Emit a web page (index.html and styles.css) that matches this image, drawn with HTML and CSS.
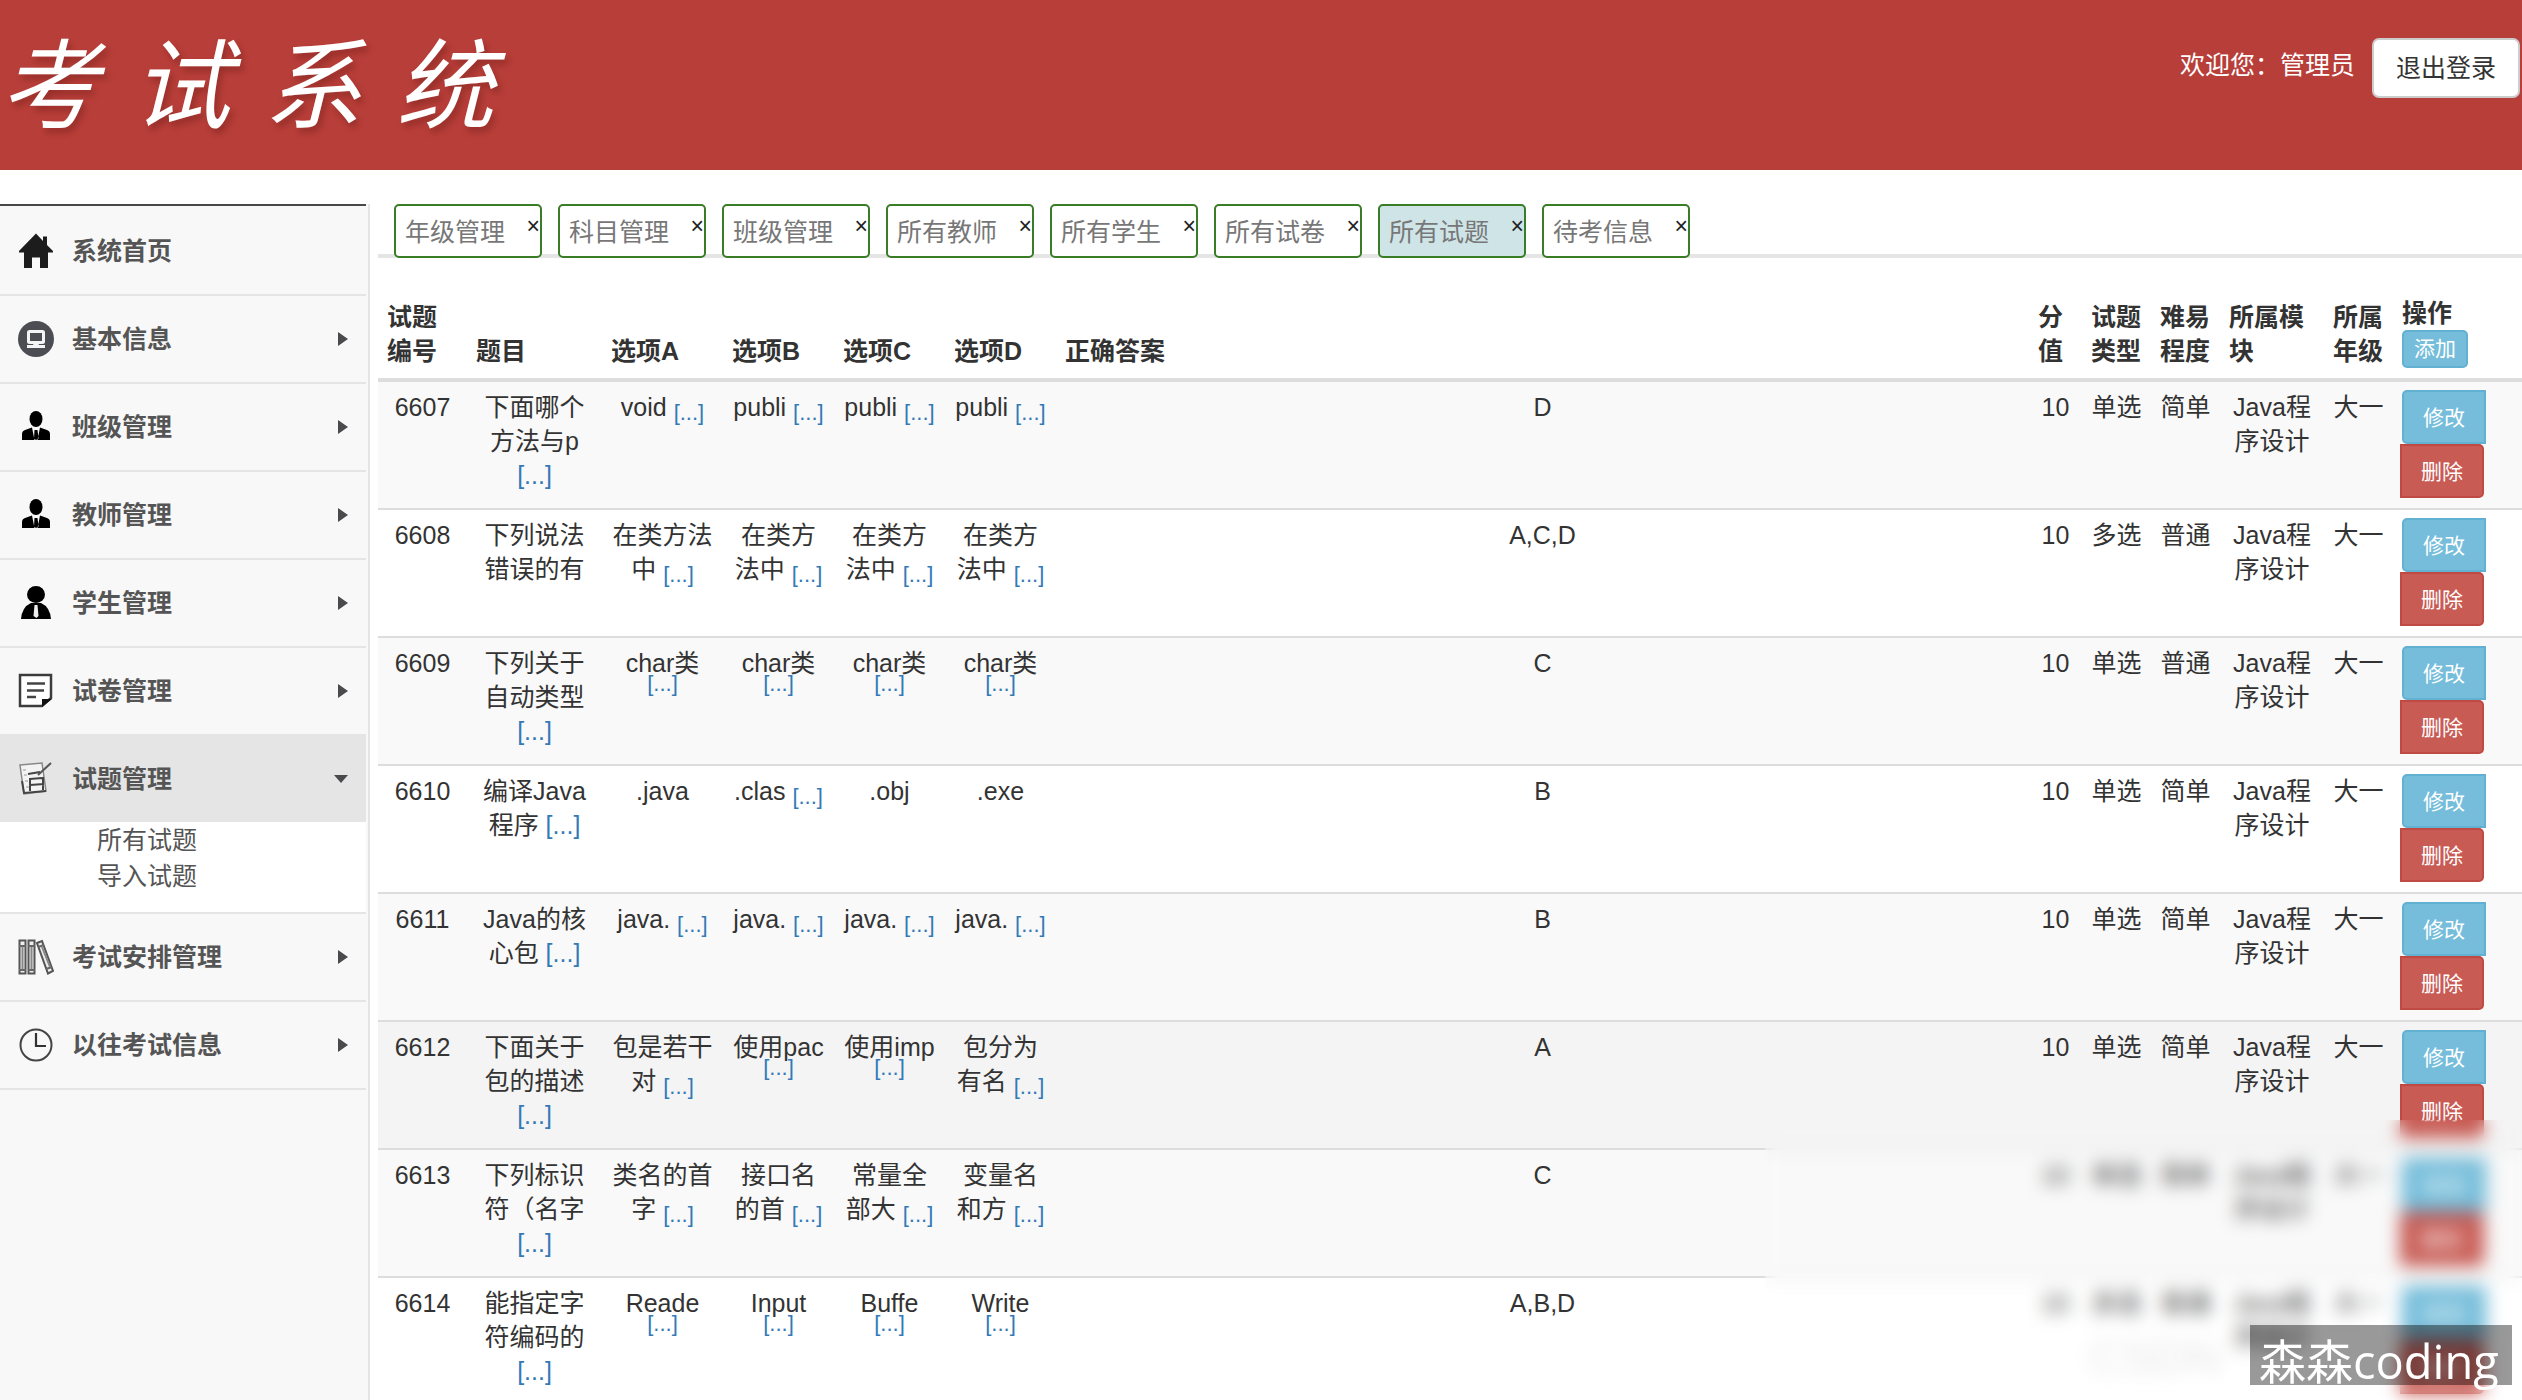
FILE: index.html
```html
<!DOCTYPE html>
<html lang="zh-CN">
<head>
<meta charset="utf-8">
<title>考试系统</title>
<link rel="stylesheet" href="styles.css">
</head>
<body>
<header class="top">
  <h1 class="logo"><span>考</span><span>试</span><span>系</span><span>统</span></h1>
  <div class="user">
    <span class="welcome">欢迎您：管理员</span>
    <button class="logout" type="button">退出登录</button>
  </div>
</header>
<div class="body">
  <nav class="side">
    <ul class="menu">
      <li><a class="item" href="#"><svg class="icon" viewBox="0 0 36 36"><path fill="#1c1c1c" d="M18 .5 1 18v1.500h5V35h8V24.500h8V35h8V19.500h5V18l-6-6V3.500h-4V8z"/></svg><span>系统首页</span></a></li>
      <li><a class="item" href="#"><svg class="icon" viewBox="0 0 36 36"><circle cx="18" cy="18" r="18" fill="#4b4d52"/><rect x="10.500" y="10.500" width="15" height="11" rx="1" fill="none" stroke="#f4f4f4" stroke-width="3"/><path fill="#f4f4f4" d="M16 22h4l1 2h6v3H9v-3h6z"/></svg><span>基本信息</span><i class="arrow"></i></a></li>
      <li><a class="item" href="#"><svg class="icon" viewBox="0 0 36 36"><ellipse cx="18" cy="10" rx="6.500" ry="8"/><path d="M4 31v-6q0-3 3-4l7-2.500L16.500 31zM32 31v-6q0-3-3-4l-7-2.500L19.500 31zM16.500 21h3l1 8.500L18 31l-2-1.500z"/></svg><span>班级管理</span><i class="arrow"></i></a></li>
      <li><a class="item" href="#"><svg class="icon" viewBox="0 0 36 36"><ellipse cx="18" cy="10" rx="6.500" ry="8"/><path d="M4 31v-6q0-3 3-4l7-2.500L16.500 31zM32 31v-6q0-3-3-4l-7-2.500L19.500 31zM16.500 21h3l1 8.500L18 31l-2-1.500z"/></svg><span>教师管理</span><i class="arrow"></i></a></li>
      <li><a class="item" href="#"><svg class="icon" viewBox="0 0 36 36"><ellipse cx="18" cy="9.500" rx="9" ry="8.500"/><path d="M3 34q1-12 10-16h10q9 4 10 16z"/><path fill="#eee" d="M16.500 20h3l1 11-2 2-3-2z"/></svg><span>学生管理</span><i class="arrow"></i></a></li>
      <li><a class="item" href="#"><svg class="icon" viewBox="0 0 36 36"><path fill="#fff" stroke="#3c3c3c" stroke-width="2.500" d="M2 2h31v23l-9 8H2z"/><path fill="#111" d="M24 34v-8h10z"/><path stroke="#444" stroke-width="2.500" d="M9 10.500h18M9 17.500h17M9 24h9"/></svg><span>试卷管理</span><i class="arrow"></i></a></li>
      <li class="open"><a class="item" href="#"><svg class="icon" viewBox="0 0 36 36"><path fill="#f3f3f3" stroke="#888" stroke-width="1.500" d="m2 4 22-2 4 28-22 3z"/><path stroke="#444" stroke-width="2" fill="none" d="m4 20 2 12 22-2M10 13l12-2M12 18l12-1M12 24l14-1M12 17v13M25 16v13"/><path stroke="#555" stroke-width="2" d="M33 2 20 14"/><path stroke="#999" d="M5 9h3M6 14h3M7 20h3M8 26h3"/></svg><span>试题管理</span><i class="arrow arrow-down"></i></a>
        <ul class="submenu">
          <li><a href="#">所有试题</a></li>
          <li><a href="#">导入试题</a></li>
        </ul>
      </li>
      <li><a class="item" href="#"><svg class="icon" viewBox="0 0 36 36"><g fill="#eee" stroke="#555" stroke-width="2"><path d="M1.500 1.500h6v33h-6zM10.500 1.500h6v33h-6zM19 4l5-2 11 30-5 2.500z"/></g><path stroke="#666" stroke-width="2" d="M1 7h7M1 31h7M10 7h7M10 31h7M20 8l6-2M28 30l6-2"/><path stroke="#888" stroke-width="2" d="M4.500 8v22M13.500 8v22M24 8l8 20"/></svg><span>考试安排管理</span><i class="arrow"></i></a></li>
      <li><a class="item" href="#"><svg class="icon" viewBox="0 0 36 36"><circle cx="18" cy="18" r="15.500" fill="none" stroke="#444" stroke-width="2"/><path fill="none" stroke="#333" stroke-width="2.200" d="M18 6v13h10"/></svg><span>以往考试信息</span><i class="arrow"></i></a></li>
    </ul>
  </nav>
  <main class="main">
    <div class="tabs">
      <div class="tab"><a href="#">年级管理</a><button type="button" aria-label="关闭">×</button></div>
      <div class="tab"><a href="#">科目管理</a><button type="button" aria-label="关闭">×</button></div>
      <div class="tab"><a href="#">班级管理</a><button type="button" aria-label="关闭">×</button></div>
      <div class="tab"><a href="#">所有教师</a><button type="button" aria-label="关闭">×</button></div>
      <div class="tab"><a href="#">所有学生</a><button type="button" aria-label="关闭">×</button></div>
      <div class="tab"><a href="#">所有试卷</a><button type="button" aria-label="关闭">×</button></div>
      <div class="tab active"><a href="#">所有试题</a><button type="button" aria-label="关闭">×</button></div>
      <div class="tab"><a href="#">待考信息</a><button type="button" aria-label="关闭">×</button></div>
    </div>
    <table class="grid">
      <colgroup>
        <col class="c-id"><col class="c-title"><col class="c-a"><col class="c-opt"><col class="c-opt"><col class="c-opt"><col>
        <col class="c-score"><col class="c-pair"><col class="c-pair"><col class="c-module"><col class="c-pair"><col class="c-act">
      </colgroup>
      <thead>
        <tr><th>试题编号</th><th>题目</th><th>选项A</th><th>选项B</th><th>选项C</th><th>选项D</th><th>正确答案</th><th>分值</th><th>试题类型</th><th>难易程度</th><th>所属模块</th><th>所属年级</th><th>操作<button class="btn add" type="button">添加</button></th></tr>
      </thead>
      <tbody>
        <tr><td>6607</td><td>下面哪个方法与p <a href="#">[...]</a></td><td>void <a class="more" href="#">[...]</a></td><td>publi <a class="more" href="#">[...]</a></td><td>publi <a class="more" href="#">[...]</a></td><td>publi <a class="more" href="#">[...]</a></td><td>D</td><td>10</td><td>单选</td><td>简单</td><td>Java程序设计</td><td>大一</td><td class="act"><button class="btn edit" type="button">修改</button><button class="btn del" type="button">删除</button></td></tr>
        <tr><td>6608</td><td>下列说法错误的有</td><td>在类方法中 <a class="more" href="#">[...]</a></td><td>在类方法中 <a class="more" href="#">[...]</a></td><td>在类方法中 <a class="more" href="#">[...]</a></td><td>在类方法中 <a class="more" href="#">[...]</a></td><td>A,C,D</td><td>10</td><td>多选</td><td>普通</td><td>Java程序设计</td><td>大一</td><td class="act"><button class="btn edit" type="button">修改</button><button class="btn del" type="button">删除</button></td></tr>
        <tr><td>6609</td><td>下列关于自动类型 <a href="#">[...]</a></td><td>char类 <a class="more under" href="#">[...]</a></td><td>char类 <a class="more under" href="#">[...]</a></td><td>char类 <a class="more under" href="#">[...]</a></td><td>char类 <a class="more under" href="#">[...]</a></td><td>C</td><td>10</td><td>单选</td><td>普通</td><td>Java程序设计</td><td>大一</td><td class="act"><button class="btn edit" type="button">修改</button><button class="btn del" type="button">删除</button></td></tr>
        <tr><td>6610</td><td>编译Java程序 <a href="#">[...]</a></td><td>.java</td><td>.clas <a class="more" href="#">[...]</a></td><td>.obj</td><td>.exe</td><td>B</td><td>10</td><td>单选</td><td>简单</td><td>Java程序设计</td><td>大一</td><td class="act"><button class="btn edit" type="button">修改</button><button class="btn del" type="button">删除</button></td></tr>
        <tr><td>6611</td><td>Java的核心包 <a href="#">[...]</a></td><td>java. <a class="more" href="#">[...]</a></td><td>java. <a class="more" href="#">[...]</a></td><td>java. <a class="more" href="#">[...]</a></td><td>java. <a class="more" href="#">[...]</a></td><td>B</td><td>10</td><td>单选</td><td>简单</td><td>Java程序设计</td><td>大一</td><td class="act"><button class="btn edit" type="button">修改</button><button class="btn del" type="button">删除</button></td></tr>
        <tr class="hover"><td>6612</td><td>下面关于包的描述 <a href="#">[...]</a></td><td>包是若干对 <a class="more" href="#">[...]</a></td><td>使用pac <a class="more under" href="#">[...]</a></td><td>使用imp <a class="more under" href="#">[...]</a></td><td>包分为有名 <a class="more" href="#">[...]</a></td><td>A</td><td>10</td><td>单选</td><td>简单</td><td>Java程序设计</td><td>大一</td><td class="act"><button class="btn edit" type="button">修改</button><button class="btn del" type="button">删除</button></td></tr>
        <tr><td>6613</td><td>下列标识符（名字 <a href="#">[...]</a></td><td>类名的首字 <a class="more" href="#">[...]</a></td><td>接口名的首 <a class="more" href="#">[...]</a></td><td>常量全部大 <a class="more" href="#">[...]</a></td><td>变量名和方 <a class="more" href="#">[...]</a></td><td>C</td><td>10</td><td>单选</td><td>简单</td><td>Java程序设计</td><td>大一</td><td class="act"><button class="btn edit" type="button">修改</button><button class="btn del" type="button">删除</button></td></tr>
        <tr><td>6614</td><td>能指定字符编码的 <a href="#">[...]</a></td><td>Reade <a class="more under" href="#">[...]</a></td><td>Input <a class="more under" href="#">[...]</a></td><td>Buffe <a class="more under" href="#">[...]</a></td><td>Write <a class="more under" href="#">[...]</a></td><td>A,B,D</td><td>10</td><td>多选</td><td>普通</td><td>Java程序设计</td><td>大一</td><td class="act"><button class="btn edit" type="button">修改</button><button class="btn del" type="button">删除</button></td></tr>
      </tbody>
    </table>
  </main>
</div>
<div class="site-mark">CSDN</div>
<div class="haze"></div>
<div class="author">森森coding</div>
</body>
</html>
```
FILE: styles.css
```css
* { box-sizing: border-box; }
body {
  margin: 0;
  height: 100vh;
  display: flex;
  flex-direction: column;
  overflow: hidden;
  background: #fff;
  color: #333;
  font: 25px/34px "Liberation Sans", "Noto Sans CJK SC", sans-serif;
}
ul { list-style: none; margin: 0; padding: 0; }
a { color: #337ab7; text-decoration: none; }
button { font: inherit; cursor: pointer; }

.top {
  flex: none;
  display: flex;
  justify-content: space-between;
  align-items: flex-start;
  height: 170px;
  background: #b83e39;
}
.logo {
  display: flex;
  gap: 34px;
  margin: 0;
  padding: 18px 0 0;
  color: #fff;
  font: italic 400 98px/120px "Noto Sans CJK SC", sans-serif;
  text-shadow: 3px 5px 6px rgba(90, 20, 15, .35);
}
.user { display: flex; gap: 17px; padding: 38px 2px 0 0; }
.welcome { padding-top: 10px; color: #fff; }
.logout {
  height: 60px;
  padding: 0 22px;
  border: 2px solid #ccc;
  border-radius: 7px;
  background: #fff;
  color: #333;
}

.body { flex: 1; display: flex; min-height: 0; }
.side {
  flex: none;
  width: 370px;
  margin-top: 34px;
  padding-right: 2px;
  border-right: 2px solid #e5e5e5;
  background: #f8f8f8;
}
.menu { border-top: 2px solid #48484a; padding-top: 2px; }
.menu > li { border-bottom: 2px solid #e5e5e5; }
.item {
  display: flex;
  align-items: center;
  height: 86px;
  padding: 0 18px;
  color: #555;
  font-weight: 700;
}
.icon { width: 36px; height: 36px; margin-right: 18px; }
.arrow {
  margin-left: auto;
  border: 7px solid transparent;
  border-left: 10px solid #4a4a4c;
  border-right: 0;
}
.arrow-down { border: 7px solid transparent; border-top: 8px solid #4a4a4c; border-bottom: 0; }
.open .item { background: #e5e5e5; }
.submenu { height: 90px; padding-left: 97px; background: #fff; line-height: 36px; }
.submenu a { color: #555; }

.main { flex: 1; min-width: 0; padding: 34px 0 0 8px; }
.tabs {
  display: flex;
  gap: 16px;
  height: 54px;
  margin-bottom: 30px;
  padding-left: 16px;
  background: linear-gradient(#e5e5e5, #e5e5e5) bottom / 100% 4px no-repeat;
}
.tab {
  display: flex;
  justify-content: space-between;
  width: 148px;
  padding: 9px 0 0 9px;
  border: 2px solid #3a7d27;
  border-radius: 5px;
  background: #fff;
}
.tab.active { background: #cfe4e7; }
.tab a { color: #777; }
.tab button {
  height: 22px;
  padding: 0;
  border: 0;
  background: none;
  color: #222;
  font-size: 23px;
  line-height: 22px;
}

.grid { width: 100%; table-layout: fixed; border-collapse: separate; border-spacing: 0; }
.c-id { width: 89px; }
.c-title { width: 135px; }
.c-a { width: 121px; }
.c-opt { width: 111px; }
.c-score { width: 53px; }
.c-pair { width: 69px; }
.c-module { width: 104px; }
.c-act { width: 129px; }
.grid th {
  padding: 8px 9px 10px;
  border-bottom: 4px solid #ddd;
  text-align: left;
  vertical-align: bottom;
}
.grid td {
  height: 128px;
  padding: 8px 9px;
  border-bottom: 2px solid #ddd;
  text-align: center;
  vertical-align: top;
}
.grid tbody tr:nth-child(odd) { background: #f9f9f9; }
.grid tbody tr.hover { background: #f4f4f4; }
.more { font-size: 22px; line-height: 20px; vertical-align: -4px; }
.under { display: block; margin-top: -6px; }
.grid td.act { padding: 8px 9px 0 7px; text-align: left; }
.btn {
  display: block;
  width: 84px;
  height: 54px;
  padding: 1px 0 0;
  border: 2px solid;
  color: #fff;
  font-size: 21px;
  font-weight: 400;
  line-height: 30px;
}
.add, .edit { border-color: #62b1d3; background: #75bdda; }
.add { width: 66px; height: 38px; padding: 0; border-radius: 5px; }
.edit { margin-left: 2px; border-radius: 5px 0 0 5px; }
.del { border-color: #bf4a43; background: #c85b54; border-radius: 0 5px 5px 0; }

.site-mark {
  position: fixed;
  right: 302px;
  bottom: 20px;
  color: #e6e6e6;
  font-size: 46px;
  line-height: 46px;
}
.haze {
  position: fixed;
  right: 0;
  bottom: 0;
  width: 757px;
  height: 280px;
  backdrop-filter: blur(9px);
}
.author {
  position: fixed;
  right: 10px;
  bottom: 15px;
  width: 262px;
  height: 60px;
  padding: 6px 0 0 9px;
  background: rgba(0, 0, 0, .4);
  color: #fff;
  font: 47px/60px "Open Sans", "Noto Sans CJK SC", sans-serif;
  white-space: nowrap;
}
```
